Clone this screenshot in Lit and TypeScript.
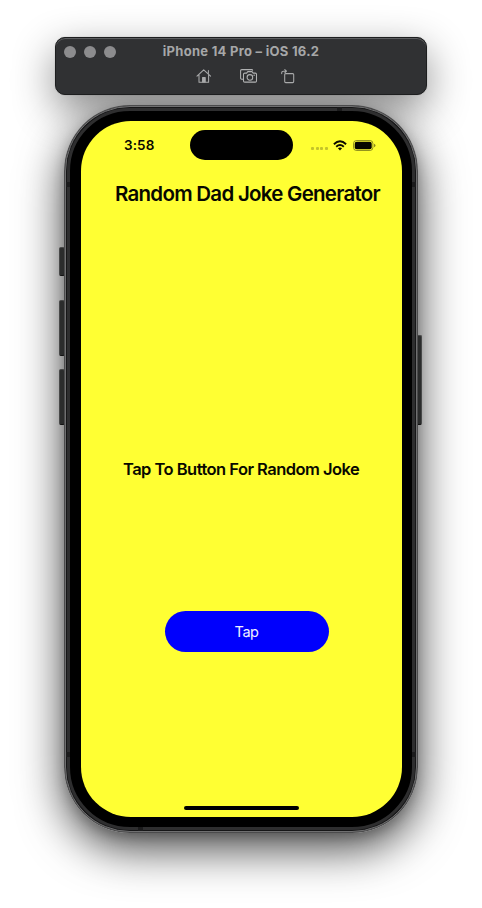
import { LitElement, html, css, svg } from "lit";
import { customElement, property } from "lit/decorators.js";

const homeIcon = svg`<svg width="16" height="16" viewBox="0 0 16 16" fill="none" stroke="#a9aaab" stroke-width="1.05" stroke-linejoin="round" stroke-linecap="round">
  <path d="M1 8.2 L7.7 1.8 L14.6 8.2 M3 6.8 V14.2 H12.6 V6.8 M12.4 5.6 V2.6"/><path d="M6.6 14 V9.6 H9.2 V14 Z" fill="#a9aaab"/></svg>`;
const cameraIcon = svg`<svg width="18" height="14" viewBox="0 0 18 14" fill="none" stroke="#b0b1b2" stroke-width="1.05" stroke-linejoin="round">
  <path d="M3.4 10.2 H1.7 Q.6 10.2 .6 9.1 V1.7 Q.6 .6 1.7 .6 H11.6 Q12.6 .6 12.7 1.6"/>
  <path d="M4.7 4.1 H6.6 L7.8 2.6 H12 L13.2 4.1 H15.3 Q16.5 4.1 16.5 5.3 V11.9 Q16.5 13.1 15.3 13.1 H4.7 Q3.5 13.1 3.5 11.9 V5.3 Q3.5 4.1 4.7 4.1 Z"/>
  <circle cx="9.9" cy="8.4" r="2.8"/><circle cx="14.2" cy="6.2" r=".3"/></svg>`;
const rotateIcon = svg`<svg width="14" height="15" viewBox="0 0 14 15" fill="none" stroke="#a9aaab" stroke-width="1.05" stroke-linejoin="round" stroke-linecap="round">
  <rect x="3.7" y="4.6" width="9" height="9" rx="1"/><path d="M.7 4.6 V3.9 Q.7 2.2 2.5 2.2 H5.2 M3.8 .6 L5.5 2.2 L3.8 3.8"/></svg>`;
const wifiIcon = svg`<svg width="14" height="11" viewBox="0 0 14 11" fill="none" stroke="#0a0a00" stroke-width="1.9">
  <path d="M.9 4.2 Q7 -1.5 13.1 4.2"/><path d="M3.2 6.7 Q7 3.3 10.8 6.7"/><path d="M4.9 8.3 Q7 6.7 9.1 8.3 L7 10.4 Z" fill="#0a0a00" stroke="none"/></svg>`;
const batteryIcon = svg`<svg width="23" height="11" viewBox="0 0 23 11">
  <rect x=".5" y=".5" width="19.4" height="10" rx="3" fill="none" stroke="#000" stroke-opacity=".42"/>
  <rect x="1.7" y="1.8" width="17" height="7.4" rx="2" fill="#050500"/>
  <path d="M21 3.8 Q22.5 4.3 22.5 5.5 T21 7.2 Z" fill="#000" fill-opacity=".45"/></svg>`;

@customElement("simulator-toolbar")
export class SimulatorToolbar extends LitElement {
  @property() heading = "";
  static styles = css`
    :host { display: block; box-sizing: border-box; width: 372px; height: 58px; border-radius: 10px; background: #303133;
      border: 1px solid #1d1e1f; box-shadow: inset 0 1px 0 #5c5d5f, 0 14px 42px rgba(0,0,0,.46), 0 0 1px rgba(0,0,0,.4); }
    .top { display: grid; grid-template-columns: 54px 1fr 54px; align-items: center; height: 26px; }
    .lights { display: flex; gap: 8px; padding: 1px 0 0 8px; }
    .light { width: 12px; height: 12px; flex: none; border-radius: 50%; background: #8c8c8e; }
    .name { text-align: center; white-space: nowrap; font-size: 13px; line-height: 16px; font-weight: 700; color: #a6a7a8; letter-spacing: 0.28px; }
    .tools { display: flex; align-items: center; height: 24px; padding-left: 140px; }
    .camera { margin: 0 23px 0 28px; }
    svg { display: block; }
  `;
  render() {
    return html`<div class="top"><div class="lights"><i class="light"></i><i class="light"></i><i class="light"></i></div>
      <div class="name">${this.heading}</div></div>
      <div class="tools">${homeIcon}<span class="camera">${cameraIcon}</span>${rotateIcon}</div>`;
  }
}

@customElement("phone-frame")
export class PhoneFrame extends LitElement {
  static styles = css`
    :host { display: block; position: relative; width: 354px; height: 728px; border-radius: 66px;
      box-shadow: 0 15px 46px rgba(0,0,0,.74), 0 4px 12px rgba(0,0,0,.18); }
    .shell { position: relative; z-index: 2; box-sizing: border-box; height: 728px; padding: 1px; border-radius: 66px; background: #4b4b4c; }
    .rim { box-sizing: border-box; height: 726px; border-radius: 65px; border: 1px solid #6f6f70; background: #161617; padding: 1px; }
    .band { box-sizing: border-box; height: 722px; border-radius: 63px; border: 3px solid #2e2e2f; background: #000; padding: 10px 10px 10px 11px; }
    .screen { height: 696px; border-radius: 50px; overflow: hidden; background: #ffff33; }
    .key { position: absolute; z-index: 1; width: 6px; box-sizing: border-box; background: #2b2c2c; border: 1px solid #484949; border-bottom-color: #111; border-radius: 2px; }
    .mute { left: -5px; top: 142px; height: 29px; }
    .up { left: -5px; top: 195px; height: 56px; }
    .down { left: -5px; top: 264px; height: 56px; }
    .power { right: -4px; top: 230px; height: 90px; }
    .seam { position: absolute; background: #1b1b1c; }
    .s1 { left: 273px; top: 2px; width: 5px; height: 4px; }
    .s2 { left: 74px; bottom: 2px; width: 5px; height: 4px; }
    .s3 { left: 2px; top: 77px; width: 4px; height: 5px; }
    .s4 { right: 2px; top: 77px; width: 4px; height: 5px; }
    .s5 { left: 2px; bottom: 76px; width: 4px; height: 5px; }
    .s6 { right: 2px; bottom: 76px; width: 4px; height: 5px; }
  `;
  render() {
    return html`<i class="key mute"></i><i class="key up"></i><i class="key down"></i><i class="key power"></i>
      <div class="shell"><div class="rim"><div class="band"><div class="screen"><slot></slot></div></div></div>
      ${[1, 2, 3, 4, 5, 6].map((n) => html`<i class="seam s${n}"></i>`)}</div>`;
  }
}

@customElement("joke-screen")
export class JokeScreen extends LitElement {
  static styles = css`
    :host { display: flex; flex-direction: column; height: 696px; color: #080800; white-space: nowrap; }
    .status { display: grid; grid-template-columns: 109px 103px 1fr; align-items: center; height: 30px; padding-top: 9px; }
    .time { padding-left: 43px; font-size: 13.5px; font-weight: 600; line-height: 16px; letter-spacing: 0.1px; }
    .island { height: 30px; border-radius: 15px; background: #000; }
    .signals { display: flex; align-items: center; padding-left: 18px; }
    .dots { display: flex; gap: 1.5px; padding-top: 7px; margin-right: 5.5px; }
    .dot { width: 3px; height: 3px; border-radius: 1px; background: #c4c42a; }
    .battery { margin-left: 6px; }
    svg { display: block; }
    .dots { width: 16.5px; }
    .signals > svg { margin-left: -0.5px; }
    h1 { margin: 21px 0 0 34px; font-size: 20.5px; line-height: 26px; font-weight: 600; letter-spacing: -0.74px; }
    p { margin: 252px 0 0 42px; font-size: 16.5px; line-height: 20px; font-weight: 600; letter-spacing: -0.53px; }
    button { margin: 132px 0 0 84px; width: 164px; height: 41px; padding: 0 1px 0 0; border: 0; border-radius: 20.5px; background: #0000fd; color: #f0f0ff;
      font: 400 14.5px/41px Inter, sans-serif; letter-spacing: -0.5px; }
    .home { width: 115px; height: 4px; border-radius: 2px; background: #000; margin: auto 0 7px 103px; }
  `;
  render() {
    return html`<div class="status"><span class="time">3:58</span><i class="island"></i>
      <div class="signals"><span class="dots">${[0, 1, 2, 3].map(() => html`<i class="dot"></i>`)}</span>${wifiIcon}<span class="battery">${batteryIcon}</span></div></div>
      <h1>Random Dad Joke Generator</h1>
      <p>Tap To Button For Random Joke</p>
      <button>Tap</button>
      <i class="home"></i>`;
  }
}

@customElement("app-root")
export class AppRoot extends LitElement {
  static styles = css`
    :host { display: flex; flex-direction: column; align-items: center; gap: 10px; box-sizing: border-box; width: 482px; height: 908px;
      padding-top: 37px; overflow: hidden; isolation: isolate; background: #fff; font-family: Inter, "Liberation Sans", sans-serif; }
    simulator-toolbar { position: relative; z-index: 1; }
  `;
  render() {
    return html`<simulator-toolbar heading="iPhone 14 Pro – iOS 16.2"></simulator-toolbar>
      <phone-frame><joke-screen></joke-screen></phone-frame>`;
  }
}
